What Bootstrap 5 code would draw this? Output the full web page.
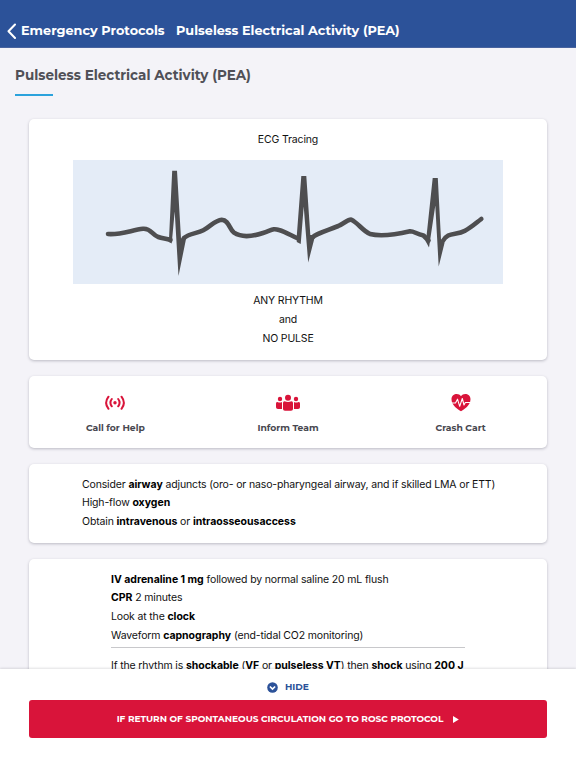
<!DOCTYPE html>
<html lang="en">
<head>
<meta charset="utf-8">
<meta name="viewport" content="width=device-width, initial-scale=1">
<title>Pulseless Electrical Activity (PEA)</title>
<link href="https://cdn.jsdelivr.net/npm/bootstrap@5.3.0/dist/css/bootstrap.min.css" rel="stylesheet">
<style>
  body { font-family: Inter, "Liberation Sans", sans-serif; font-size: 10.5px; letter-spacing: -.15px; line-height: 18.75px; background: #f4f3f8; color: #111; height: 100vh; }
  .brandfont { font-family: Montserrat, Inter, Lato, sans-serif; font-weight: 700; }
  .topbar { height: 48px; background: #2c5299; border-bottom: 1px solid #48639f; color: #fff; padding: 22px 6px 0; font-size: 12.8px; white-space: nowrap; letter-spacing: 0; }
  .back-label { margin-left: 4px; width: 155px; }
  .scroller { padding: 15px 29px 0; min-height: 0; }
  .page-title { margin: 0 -14px; height: 56px; }
  .page-title h1 { font-size: 13.5px; line-height: 24px; letter-spacing: 0; color: #505057; margin: 0; }
  .page-title span { width: 38px; height: 2px; background: #2ba2dc; margin-top: 7px; }
  .panel { border: 0; border-radius: 5px; margin-bottom: 16px; box-shadow: 0 1px 3px rgba(40,40,60,.28); flex: none; color: #111; }
  .panel-ecg { height: 241px; padding-top: 12px; }
  .panel-ecg svg { width: 430px; height: 124px; margin: 10px 0 8.600px; }
  .panel-actions { height: 72px; padding-top: 17px; }
  .panel-actions .action { font-size: 9.2px; color: #484850; line-height: 16px; letter-spacing: 0; }
  .panel-actions svg { display: block; margin: 0 auto 7px; }
  .panel-airway { height: 79px; padding: 11.700px 0 0 53px; }
  .panel-drugs { height: 150px; padding: 11.700px 82px 0; white-space: nowrap; }
  .panel-drugs hr { margin: 1.300px 0 8.700px; opacity: 1; border-top: 1px solid #c8c8cb; }
  .footer-bar { height: 99px; background: #fff; padding: 8px 29px 0; box-shadow: 0 -1px 2px rgba(40,40,60,.14); position: relative; }
  .hide-link { color: #2c5299; font-size: 9.1px; line-height: 20px; gap: 7px; height: 20px; letter-spacing: 0; }
  .rosc { height: 38px; margin-top: 3px; border-radius: 3px; border: 0; background: #d9143a; color: #fff; font-size: 9px; letter-spacing: 0; gap: 10px; padding: 0; }
  .rosc:hover { background: #bd1132; color: #fff; }
  b { font-weight: 700; color: #000; letter-spacing: -.02px; }
</style>
<script src="https://cdn.jsdelivr.net/npm/bootstrap@5.3.0/dist/js/bootstrap.bundle.min.js"></script>
</head>
<body class="d-flex flex-column overflow-hidden">
<header class="topbar brandfont d-flex align-items-start flex-shrink-0">
  <svg width="11" height="17" viewBox="0 0 11 17" fill="none" stroke="#fff" stroke-width="2" stroke-linecap="round" stroke-linejoin="round"><path d="M9 2.500 2.500 9.300 9 16"/></svg>
  <span class="back-label">Emergency Protocols</span>
  <span class="bar-title">Pulseless Electrical Activity (PEA)</span>
</header>

<main class="scroller flex-grow-1 overflow-hidden d-flex flex-column">
  <div class="page-title flex-shrink-0">
    <h1 class="brandfont">Pulseless Electrical Activity (PEA)</h1>
    <span class="d-block"></span>
  </div>

  <section class="card panel panel-ecg text-center align-items-center">
    <div>ECG Tracing</div>
    <svg viewBox="73 160 430 124">
      <rect x="73" y="160" width="430" height="124" fill="#e4ecf7"/>
      <g fill="none" stroke="#4e4e50" stroke-width="4.6" stroke-linecap="round" stroke-linejoin="round">
        <path d="M108 234C121 235 132 230 143 228.800C151 228 152 235 158.300 237C162 238.500 166 238.500 170.500 240"/>
        <path d="M184 238C189 233.500 197 233.500 203.300 230.300C210 227 215 220 221.700 219.700C229 220 229 229 234 232.700C242 238 254 236 263 233C272 230 273 228 279 230C286 232 291 235.500 298 238.500"/>
        <path d="M312.500 237.500C315 234.500 319 233.500 338.300 226C345 223 348 219 351.500 219.700C358 223 363 231 370 234C380 236.500 394 235 410 231.200C414 231 416 234 423.500 235.500L428.500 240.500"/>
        <path d="M442.500 241.500C448 231 456 236 465 230.700C472 227 476 223 481.300 219"/>
      </g>
      <g fill="#4e4e50">
        <path d="M169 239 172.200 170.700H177L181 238.500 184 236.500 186 239 178.500 276 174.700 211.500 171.700 243.500 169 242Z"/>
        <path d="M296.700 237 301.300 176H306.300L310.300 235 312 235 314.500 238 308.200 262.500 303.700 206.500 300.700 244 296.800 242Z"/>
        <path d="M426.300 238.300 432.700 178H437.800L441 239.500 444.500 243 438.700 266.500 435.300 205.500 429 247.500 425.500 241Z"/>
      </g>
    </svg>
    <div>ANY RHYTHM<br>and<br>NO PULSE</div>
  </section>

  <section class="card panel panel-actions">
    <div class="row g-0 text-center brandfont">
      <div class="col action">
        <svg width="20" height="20" viewBox="0 0 20 20" fill="none" stroke="#d9143a" stroke-width="2" stroke-linecap="round"><path d="M3.500 3.700Q-1.300 10 3.500 15.800M6.800 6Q4 9.700 6.800 13.300M16.500 3.700Q21.300 10 16.500 15.800M13.200 6Q16 9.700 13.200 13.300"/><circle cx="10" cy="9.700" r="1.700" fill="#d9143a" stroke="none"/></svg>
        Call for Help
      </div>
      <div class="col action">
        <svg width="24" height="20" viewBox="0 0 24 20" fill="#d9143a"><circle cx="12" cy="4.800" r="3"/><circle cx="4" cy="6" r="2.200"/><circle cx="20" cy="6" r="2.200"/><path d="M7 10Q7 8.300 8.500 8.300Q12 9.800 15.500 8.300Q17 8.300 17 10V16Q17 17.800 15 17.800H9Q7 17.800 7 16ZM0 10.400Q0 9 1.500 9Q4 10 6 9V16H2Q0 16 0 14.300ZM24 10.400Q24 9 22.500 9Q20 10 18 9V16H22Q24 16 24 14.300Z"/></svg>
        Inform Team
      </div>
      <div class="col action">
        <svg width="20" height="20" viewBox="0 0 20 20"><path d="M10 18.200C7 16.500 .500 12.500 .500 6.300C.500 .700 7.500-.700 10 3.200C12.500-.700 19.500.700 19.500 6.300C19.500 12.500 13 16.500 10 18.200Z" fill="#d9143a"/><path d="M1 10H4.500L6.500 6.200 8.700 13.300 11.300 5.500 13 12 14.300 9.500H19" fill="none" stroke="#fff" stroke-width="1.100" stroke-linejoin="round"/></svg>
        Crash Cart
      </div>
    </div>
  </section>

  <section class="card panel panel-airway">
    <div>Consider <b>airway</b> adjuncts (oro- or naso-pharyngeal airway, and if skilled LMA or ETT)</div>
    <div>High-flow <b>oxygen</b></div>
    <div>Obtain <b>intravenous</b> or <b>intraosseousaccess</b></div>
  </section>

  <section class="card panel panel-drugs">
    <div><b>IV adrenaline 1 mg</b> followed by normal saline 20 mL flush</div>
    <div><b>CPR</b> 2 minutes</div>
    <div>Look at the <b>clock</b></div>
    <div>Waveform <b>capnography</b> (end-tidal CO2 monitoring)</div>
    <hr>
    <div>If the rhythm is <b>shockable</b> (<b>VF</b> or <b>pulseless VT</b>) then <b>shock</b> using <b>200 J</b></div>
  </section>
</main>

<footer class="footer-bar flex-shrink-0">
  <div class="hide-link brandfont d-flex align-items-center justify-content-center">
    <svg width="11" height="11" viewBox="0 0 11 11"><circle cx="5.500" cy="5.500" r="5.300" fill="#2c5299"/><path d="M2.900 4.500 5.500 7 8.100 4.500" fill="none" stroke="#fff" stroke-width="1.700"/></svg>
    <span>HIDE</span>
  </div>
  <button class="btn rosc brandfont w-100 d-flex align-items-center justify-content-center" type="button">
    <span>IF RETURN OF SPONTANEOUS CIRCULATION GO TO ROSC PROTOCOL</span>
    <svg width="6" height="7" viewBox="0 0 6 7" fill="#fff"><path d="M0 0 5.800 3.500 0 7Z"/></svg>
  </button>
</footer>
</body>
</html>
